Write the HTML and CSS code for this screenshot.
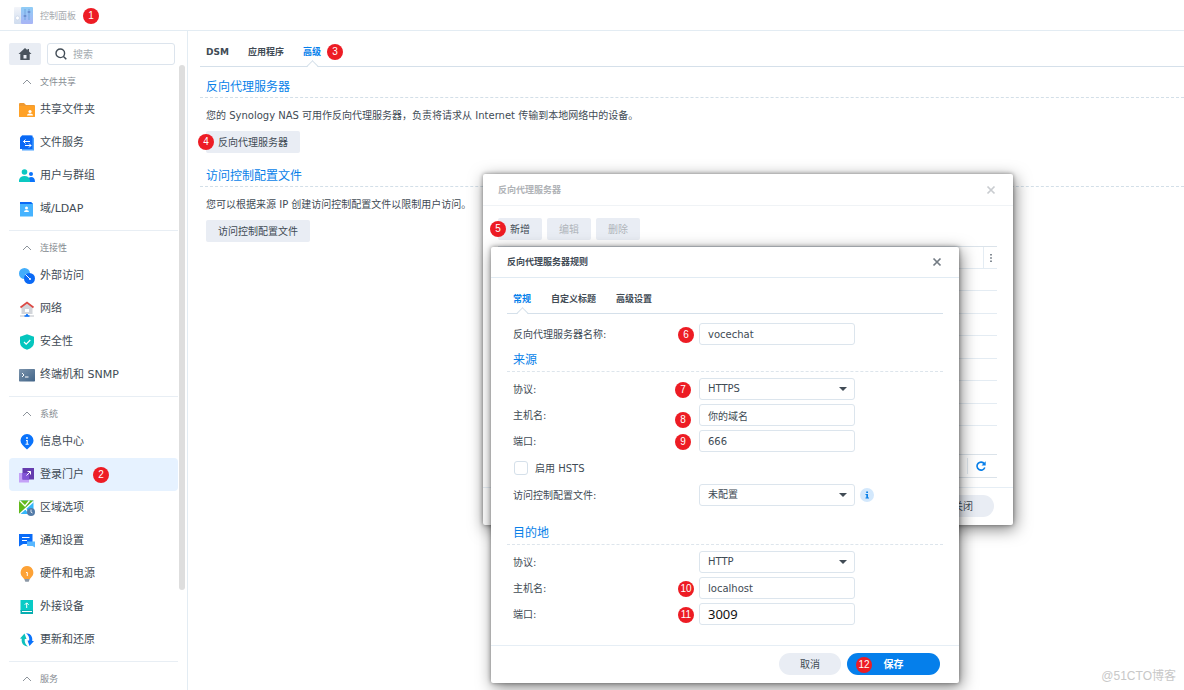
FILE: index.html
```html
<!DOCTYPE html>
<html lang="zh-CN">
<head>
<meta charset="utf-8">
<title>控制面板</title>
<link rel="stylesheet" href="styles.css">
</head>
<body>
<header class="topbar">
  <svg class="topbar-icon" viewBox="0 0 19 17">
    <defs>
      <linearGradient id="gp" x1="0" y1="0" x2="0" y2="1"><stop offset="0" stop-color="#8fcdf6"/><stop offset="1" stop-color="#a9b4f5"/></linearGradient>
      <linearGradient id="gl" x1="0" y1="0" x2="0" y2="1"><stop offset="0" stop-color="#f3f5f9"/><stop offset="1" stop-color="#cfdcef"/></linearGradient>
    </defs>
    <rect width="8" height="17" rx="1" fill="url(#gl)"/><rect x="7" width="12" height="17" rx="1" fill="url(#gp)"/>
    <circle cx="3.500" cy="11" r="2" fill="#fff" stroke="#c3cfe2" stroke-width=".6"/>
    <path d="M11 2v11M15 2v11" stroke="#6ea4dd" stroke-width=".9"/><path d="M9.700 9h2.600M13.700 5h2.600" stroke="#6484c8" stroke-width="1.300"/>
  </svg>
  <h1 class="topbar-title">控制面板</h1>
  <span class="badge">1</span>
</header>
<div class="layout">
  <aside class="sidebar">
    <div class="sidebar-tools">
      <button class="home" type="button" aria-label="主页"><svg viewBox="0 0 14 12"><path d="M7 0 .5 6H2.300v6h9.400V6h1.800L11 3.600V1H9.500v1.300z" fill="#49535d"/><path d="M5.500 7h3v3.500h-3z" fill="#e9edf4"/></svg></button>
      <label class="search"><svg viewBox="0 0 12 12"><circle cx="5.300" cy="5.300" r="4.300" fill="none" stroke="#424c56" stroke-width="1.400"/><path d="m8.500 8.500 2.800 2.800" stroke="#424c56" stroke-width="1.500"/></svg><input type="search" placeholder="搜索" aria-label="搜索"></label>
    </div>
    <nav class="nav">
      <section class="group">
        <h2 class="group-title"><svg viewBox="0 0 10 6"><path d="m1 5 4-4 4 4"/></svg>文件共享</h2>
        <a class="item" href="#"><svg viewBox="0 0 16 16"><path d="M0 2q0-1 1-1h4l2 2h8q1 0 1 1v10q0 1-1 1H1q-1 0-1-1z" fill="#ef9a32"/><path d="M0 4h15q1 0 1 1v9q0 1-1 1H1q-1 0-1-1z" fill="#ffa126"/><circle cx="11" cy="9.500" r="1.600" fill="#fff"/><path d="M8 13.500q0-2 3-2t3 2z" fill="#fff"/></svg>共享文件夹</a>
        <a class="item" href="#"><svg viewBox="0 0 16 16"><path d="M3 .5h9l3 2.500v12.500H3z" fill="#4aa2ff"/><path d="M1 2.500 3 .5h10.500v13.500H1z" fill="#0a69f5"/><path d="M11 6.500H4.500m2-2-2 2 2 2M6 10.500h6m-2-2 2 2-2 2" fill="none" stroke="#fff"/></svg>文件服务</a>
        <a class="item" href="#"><svg viewBox="0 0 16 16"><circle cx="12" cy="6" r="2" fill="#0a73fb"/><path d="M9 14V11q1-2 3-2 4 0 4 5z" fill="#0a73fb"/><circle cx="5.500" cy="4" r="2.800" fill="#0cc8c2"/><path d="M0 14V12q1-4 5.500-4T11 12v2z" fill="#0cc8c2"/></svg>用户与群组</a>
        <a class="item" href="#"><svg viewBox="0 0 16 16"><path d="M1 1h11l2 2v12.500H1z" fill="#46b3ff"/><path d="M1 1h11l2 2H1z" fill="#0a69f5"/><circle cx="7.500" cy="7" r="1.500" fill="#fff"/><path d="M5 11q0-2 2.500-2T10 11z" fill="#fff"/></svg>域/LDAP</a>
      </section>
      <section class="group">
        <h2 class="group-title"><svg viewBox="0 0 10 6"><path d="m1 5 4-4 4 4"/></svg>连接性</h2>
        <a class="item" href="#"><svg viewBox="0 0 16 16"><circle cx="5.500" cy="5.500" r="5.500" fill="#42adfb"/><circle cx="10.500" cy="10.500" r="5.500" fill="#0a69f5"/><path d="m6.500 6.500 4.500 4.500" stroke="#fff"/><circle cx="11" cy="11" r="1" fill="#fff"/></svg>外部访问</a>
        <a class="item" href="#"><svg viewBox="0 0 16 16"><path d="M2.500 6 8 2l5.500 4v7h-11z" fill="#d2d5da"/><path d="M6 8h4v3H6z" fill="#fff"/><path d="m1.500 6.500 6.500-5 6.500 5" fill="none" stroke="#dc4944" stroke-width="1.700"/><path d="M1 15h14" stroke="#b9bec6"/><path d="M8 13v2M5.500 15h5" stroke="#0a73fb" stroke-width="1.700"/></svg>网络</a>
        <a class="item" href="#"><svg viewBox="0 0 16 16"><path d="m8 .2 7 2.500v5.800q0 5-7 7.300-7-2.300-7-7.300V2.700z" fill="#05c6be"/><path d="m5 8 2.200 2.200L11.300 6" fill="none" stroke="#fff" stroke-width="1.200"/></svg>安全性</a>
        <a class="item" href="#"><svg viewBox="0 0 16 16"><defs><linearGradient id="gt" x1="0" y1="0" x2="1" y2="1"><stop stop-color="#7b93ab"/><stop offset="1" stop-color="#416488"/></linearGradient></defs><rect y="2" width="16" height="12.500" rx=".7" fill="url(#gt)"/><path d="m3 6 2 2-2 2M6 10h3.500" fill="none" stroke="#fff"/></svg>终端机和 SNMP</a>
      </section>
      <section class="group">
        <h2 class="group-title"><svg viewBox="0 0 10 6"><path d="m1 5 4-4 4 4"/></svg>系统</h2>
        <a class="item" href="#"><svg viewBox="0 0 16 16"><path d="M8 0a6.500 6.500 0 0 1 6.500 6.500c0 3-2.500 5.500-6.500 9-4-3.500-6.500-6-6.500-9A6.500 6.500 0 0 1 8 0" fill="#0a73fb"/><circle cx="8" cy="4" r=".9" fill="#fff"/><path d="M7 6.500h1.200v3.800M6.500 10.300h3.200" fill="none" stroke="#fff" stroke-width="1.100"/></svg>信息中心</a>
        <a class="item item--active" href="#"><svg viewBox="0 0 16 16"><path d="M0 6h10v9.500H0z" fill="#c4a1f7"/><path d="M3.500 1H15v11.500H3.500z" fill="#653cae"/><path d="M3.500 6H10v6.500H3.500z" fill="#8254d6"/><path d="m7.500 8.500 4-4M8.500 4.500h3v3" fill="none" stroke="#fff"/></svg>登录门户<span class="badge badge--nav">2</span></a>
        <a class="item" href="#"><svg viewBox="0 0 16 16"><path d="M0 .5h14.500V14H0z" fill="#35b6fa"/><path d="M0 .5h14.500L0 14z" fill="#62b91b"/><path d="m.5.500 5.500 5.500L10.500.5M0 14.500l14.500-13M6.500 8.500l4 6" fill="none" stroke="#fff" stroke-width="1.300"/><circle cx="12" cy="12" r="4" fill="#537ba8"/><path d="M12 9.500v2.700l1.500.8" fill="none" stroke="#fff" stroke-width=".8"/></svg>区域选项</a>
        <a class="item" href="#"><svg viewBox="0 0 16 16"><path d="M0 1h13.500v10H4l-4 2.500z" fill="#0a6cf8"/><path d="M8 8.500h8v6L13.500 13H8z" fill="#58b7ff"/><path d="M3 4.500h7.500M3 7.500h5" stroke="#fff"/></svg>通知设置</a>
        <a class="item" href="#"><svg viewBox="0 0 16 16"><path d="M8 0a6.500 6.500 0 0 1 4.500 11L10.700 13.200H5.300L3.500 11A6.500 6.500 0 0 1 8 0" fill="#fda236"/><path d="M5.300 13h5.400l-1 2.700H6.300z" fill="#8c98a6"/><path d="M7 6.500h1.300V10" fill="none" stroke="#fff"/></svg>硬件和电源</a>
        <a class="item" href="#"><svg viewBox="0 0 16 16"><path d="M1.500 1H14v11H1.500z" fill="#08cbc6"/><path d="M1.500 11H14v4H1.500z" fill="#07aeb1"/><path d="M3 12.500h10" stroke="#fff"/><path d="M7.700 9V4M5.700 5.800l2-2 2 2" fill="none" stroke="#fff"/></svg>外接设备</a>
        <a class="item" href="#"><svg viewBox="0 0 16 16"><path d="M1 6.500 5.500 1.500 7.500 7H5.800C5.300 10 6.500 12.500 9 14.500 4.500 14.500 2 11 2.800 6.800z" fill="#0ec1bd"/><path d="M7 1.200c4.500 0 7 3.500 6.200 7.700H15l-4.500 5-2-5.300h1.700C10.700 5.700 9.500 3.200 7 1.200" fill="#0a73fb"/></svg>更新和还原</a>
      </section>
      <section class="group">
        <h2 class="group-title"><svg viewBox="0 0 10 6"><path d="m1 5 4-4 4 4"/></svg>服务</h2>
      </section>
      <div class="scrollbar"></div>
    </nav>
  </aside>
  <main class="main">
    <div class="tabs tabs--page">
      <button type="button" class="tab">DSM</button>
      <button type="button" class="tab">应用程序</button>
      <button type="button" class="tab tab--active">高级</button>
      <span class="badge badge--tab">3</span>
    </div>
    <section class="block">
      <h2 class="heading">反向代理服务器</h2>
      <p class="text">您的 Synology NAS 可用作反向代理服务器，负责将请求从 Internet 传输到本地网络中的设备。</p>
      <button type="button" class="btn">反向代理服务器<span class="badge badge--edge">4</span></button>
    </section>
    <section class="block">
      <h2 class="heading">访问控制配置文件</h2>
      <p class="text">您可以根据来源 IP 创建访问控制配置文件以限制用户访问。</p>
      <button type="button" class="btn">访问控制配置文件</button>
    </section>
  </main>
</div>

<section class="window window--list" aria-label="反向代理服务器">
  <header class="window-head window-head--muted"><h2>反向代理服务器</h2><button type="button" class="close" aria-label="关闭窗口"><svg viewBox="0 0 10 10"><path d="m1.500 1.500 7 7m0-7-7 7"/></svg></button></header>
  <div class="list-body">
    <div class="toolbar">
      <button type="button" class="btn">新增<span class="badge badge--edge">5</span></button>
      <button type="button" class="btn" disabled>编辑</button>
      <button type="button" class="btn" disabled>删除</button>
    </div>
    <table class="grid">
      <thead><tr><th></th><th class="grid-menu"><svg viewBox="0 0 2 10"><path d="M0 0h2v2H0zM0 4h2v2H0zM0 8h2v2H0z" fill="#66707a"/></svg></th></tr></thead>
      <tbody>
        <tr><td colspan="2"></td></tr><tr><td colspan="2"></td></tr><tr><td colspan="2"></td></tr><tr><td colspan="2"></td></tr><tr><td colspan="2"></td></tr><tr><td colspan="2"></td></tr><tr><td colspan="2"></td></tr>
      </tbody>
    </table>
    <div class="paging"><button type="button" class="refresh" aria-label="刷新"><svg viewBox="0 0 10 10"><path d="M8.300 2.800A4 4 0 1 0 8.800 6.500" fill="none" stroke="#087fe9" stroke-width="1.600"/><path d="M9.700.3v4.200H5.500z" fill="#087fe9"/></svg></button></div>
  </div>
  <footer class="window-foot window-foot--list"><button type="button" class="pill">关闭</button></footer>
</section>

<section class="window window--form" aria-label="反向代理服务器规则">
  <header class="window-head"><h2>反向代理服务器规则</h2><button type="button" class="close" aria-label="关闭窗口"><svg viewBox="0 0 10 10"><path d="m1.500 1.500 7 7m0-7-7 7"/></svg></button></header>
  <form class="form">
    <div class="tabs tabs--form">
      <button type="button" class="tab tab--active">常规</button>
      <button type="button" class="tab">自定义标题</button>
      <button type="button" class="tab">高级设置</button>
    </div>
    <div class="rows rows--first">
      <div class="row"><label for="name">反向代理服务器名称:</label><input class="field" id="name" type="text" value="vocechat"><span class="badge badge--row">6</span></div>
    </div>
    <h3 class="heading heading--form">来源</h3>
    <div class="rows">
      <div class="row"><label for="sp">协议:</label><span class="select"><select class="field" id="sp"><option>HTTPS</option></select></span><span class="badge badge--row badge--near">7</span></div>
      <div class="row"><label for="sh">主机名:</label><input class="field" id="sh" type="text" value="你的域名"><span class="badge badge--row badge--near badge--low">8</span></div>
      <div class="row"><label for="so">端口:</label><input class="field" id="so" type="text" value="666"><span class="badge badge--row badge--near">9</span></div>
      <div class="row row--check"><input type="checkbox" id="hsts"><label for="hsts">启用 HSTS</label></div>
      <div class="row"><label for="acl">访问控制配置文件:</label><span class="select"><select class="field" id="acl"><option>未配置</option></select></span><svg class="info" viewBox="0 0 14 14"><circle cx="7" cy="7" r="7" fill="#d3e8fc"/><path d="M6.200 3.500h1.800v1.500H6.200zM5.500 6H8v3.500h1v1H5.500v-1h.8V7h-.8z" fill="#0a80e8"/></svg></div>
    </div>
    <h3 class="heading heading--form heading--target">目的地</h3>
    <div class="rows">
      <div class="row"><label for="dp">协议:</label><span class="select"><select class="field" id="dp"><option>HTTP</option></select></span></div>
      <div class="row"><label for="dh">主机名:</label><input class="field" id="dh" type="text" value="localhost"><span class="badge badge--row">10</span></div>
      <div class="row"><label for="do">端口:</label><input class="field field--large" id="do" type="text" value="3009"><span class="badge badge--row">11</span></div>
    </div>
  </form>
  <footer class="window-foot"><button type="button" class="pill">取消</button><button type="button" class="pill pill--primary">保存<span class="badge badge--inside">12</span></button></footer>
</section>
<div class="watermark">@51CTO博客</div>
</body>
</html>
```
FILE: styles.css
```css
* { box-sizing: border-box; }
body {
  margin: 0;
  height: 100vh;
  display: flex;
  flex-direction: column;
  overflow: hidden;
  position: relative;
  background: #fff;
  color: #414b55;
  font: 10px/16px "DejaVu Sans", "Noto Sans CJK SC", sans-serif;
}
h1, h2, h3, p { margin: 0; font-weight: normal; }
button, input, select { font: inherit; color: inherit; }
button { border: 0; padding: 0; background: none; }
svg { display: block; flex: none; }

.badge {
  width: 16px;
  height: 16px;
  flex: none;
  border-radius: 50%;
  background: #ed1c24;
  color: #fff;
  font: 10px/16px "Liberation Sans", sans-serif;
  text-align: center;
}
.badge--nav { margin-left: 4px; }
.badge--tab { margin-left: -13px; }
.badge--edge { position: absolute; left: -8px; top: 3px; }
.badge--inside { position: absolute; left: 9px; top: 4px; }
.badge--row { position: absolute; left: 165px; top: 4px; }
.badge--near { left: 162px; }
.badge--low { top: 8px; }

.topbar {
  display: flex;
  align-items: center;
  gap: 7px;
  height: 31px;
  padding: 1px 0 0 14px;
  border-bottom: 1px solid #e3ecf3;
}
.topbar-icon { width: 19px; height: 17px; }
.topbar-title { font-size: 9px; color: #a5a9ad; }

.layout { flex: 1; display: flex; min-height: 0; }
.sidebar {
  width: 188px;
  flex: none;
  display: flex;
  flex-direction: column;
  padding-top: 12px;
  border-right: 1px solid #e3ecf3;
}
.sidebar-tools { display: flex; gap: 6px; padding: 0 12px 0 9px; }
.home {
  width: 32px;
  height: 22px;
  display: flex;
  align-items: center;
  justify-content: center;
  border-radius: 2px;
  background: #e9edf4;
}
.home svg { width: 14px; height: 12px; }
.search {
  flex: 1;
  min-width: 0;
  display: flex;
  align-items: center;
  gap: 6px;
  height: 22px;
  padding-left: 7px;
  border: 1px solid #dce4ed;
  border-radius: 3px;
}
.search svg { width: 12px; height: 12px; }
.search input { min-width: 0; flex: 1; border: 0; padding: 1px 0 0; outline: 0; background: none; }
.search input::placeholder { color: #a5abb1; }

.nav { flex: 1; min-height: 0; overflow: hidden; position: relative; padding: 0 9px; }
.group + .group { margin-top: 5px; border-top: 1px solid #e8eef4; }
.group-title {
  display: flex;
  align-items: center;
  gap: 8px;
  height: 28px;
  padding: 5px 0 0 13px;
  font-size: 9px;
  color: #858b91;
}
.group-title svg { width: 10px; height: 6px; fill: none; stroke: #8d949b; }
.item {
  display: flex;
  align-items: center;
  gap: 5px;
  height: 33px;
  padding-left: 10px;
  border-radius: 4px;
  color: inherit;
  font-size: 11px;
  text-decoration: none;
}
.item svg { width: 16px; height: 16px; }
.item--active { background: #e6f2ff; }
.scrollbar {
  position: absolute;
  top: 0;
  right: 2px;
  width: 6px;
  height: 84%;
  border-radius: 3px;
  background: #dedede;
}

.main { flex: 1; min-width: 0; padding-left: 12px; }
.tabs { display: flex; gap: 19px; padding-left: 6px; border-bottom: 1px solid #d5e0ea; }
.tabs--page { height: 36px; padding-top: 6px; align-items: center; margin-bottom: 8px; }
.tabs--form { height: 36px; padding-top: 7px; align-items: center; gap: 20px; }
.tab { position: relative; align-self: stretch; font-size: 9px; font-weight: bold; white-space: nowrap; }
.tab--active { color: #057feb; }
.tab--active::after {
  content: "";
  position: absolute;
  left: 50%;
  bottom: -5px;
  width: 8px;
  height: 8px;
  margin-left: -4px;
  border: 1px solid #d5e0ea;
  border-width: 1px 0 0 1px;
  background: linear-gradient(135deg, #fff 50%, transparent 50%);
  transform: rotate(45deg);
}
.block { margin-bottom: 11px; }
.heading {
  height: 23px;
  padding: 1px 0 0 6px;
  border-bottom: 1px dashed #d3dfe8;
  color: #087fe9;
  font-size: 12px;
  line-height: 22px;
}
.text { padding: 10px 0 7px 6px; }
.block .btn { margin-left: 6px; }
.btn {
  position: relative;
  height: 22px;
  padding: 1px 12px 0;
  border-radius: 2px;
  background: #e9edf4;
}
.btn:disabled { color: #b0b5bb; }

.window {
  position: absolute;
  border-radius: 2px;
  background: #fff;
  box-shadow: 2px 4px 16px rgba(0, 0, 0, .5), 0 0 4px rgba(0, 0, 0, .4);
}
.window--list { left: 483px; top: 174px; width: 530px; }
.window--form { left: 491px; top: 247px; width: 468px; }
.window-head {
  display: flex;
  align-items: center;
  justify-content: space-between;
  height: 31px;
  padding: 0 17px 0 16px;
  border-bottom: 1px solid #e1ebf3;
}
.window-head h2 { font-size: 9px; font-weight: bold; }
.window-head--muted { height: 32px; padding-left: 15px; border-color: #f0f3f6; color: #b0b3b7; }
.close svg { width: 10px; height: 10px; stroke: #747c84; stroke-width: 1.700; }
.window-head--muted .close svg { stroke: #c9ccd0; }

.list-body { padding: 12px 16px 9px 15px; }
.toolbar { display: flex; gap: 5px; margin-bottom: 6px; }
.grid { width: 100%; border-collapse: separate; border-spacing: 0; border-top: 1px solid #dbe3ea; }
.grid th, .grid td { height: 23px; padding: 0; border-bottom: 1px solid #e4ecf3; }
.grid tr:nth-child(odd) td { height: 22px; }
.grid thead th { height: 22px; }
.grid th.grid-menu { width: 14px; border-left: 1px solid #e4ecf3; }
.grid-menu svg { width: 2px; height: 8px; margin: 0 auto; }
.paging {
  display: flex;
  justify-content: flex-end;
  margin-top: 28px;
  padding: 3px 0;
  border: 1px solid #dbe3ea;
  border-width: 1px 0;
}
.refresh { padding: 3px 11px 3px 8px; border-left: 1px solid #e1e9f0; }
.refresh svg { width: 10px; height: 10px; }
.window-foot {
  display: flex;
  justify-content: flex-end;
  gap: 6px;
  padding: 7px 19px 8px;
  border-top: 1px solid #e6eef5;
}
.pill { position: relative; width: 62px; height: 22px; padding-top: 1px; border-radius: 11px; background: #e9edf4; }
.pill--primary { width: 93px; background: #057feb; color: #fff; font-weight: bold; }

.form { padding: 0 16px 20px; }
.rows { display: grid; gap: 4px; padding: 6px 0 0 6px; }
.rows--first { padding-top: 9px; }
.row { position: relative; display: grid; grid-template-columns: 186px 156px 1fr; align-items: center; }
.row label { padding-top: 2px; }
.row--check { grid-template-columns: 14px 1fr; gap: 7px; height: 24px; padding-left: 1px; }
.row--check input {
  appearance: none;
  width: 14px;
  height: 14px;
  margin: 0;
  border: 1px solid #d5e0ea;
  border-radius: 3px;
  background: #fff;
}
.field {
  appearance: none;
  width: 100%;
  height: 22px;
  padding: 0 8px;
  border: 1px solid #dce5ed;
  border-radius: 3px;
  background: #fff;
}
.field--large { font: 13px "Noto Sans", sans-serif; color: #111; }
.select { position: relative; display: block; }
.select::after {
  content: "";
  position: absolute;
  right: 8px;
  top: 9px;
  border: 4px solid transparent;
  border-top-color: #414b55;
  border-bottom: 0;
}
.info { width: 14px; height: 14px; margin-left: 5px; }
.heading--form { margin-top: 3px; height: 24px; border-color: #dde5ec; }
.heading--target { margin-top: 15px; }
.watermark {
  position: absolute;
  right: 8px;
  bottom: 6px;
  color: #c8c8c8;
  font: 12px/16px "Liberation Sans", "Noto Sans CJK SC", sans-serif;
}
```
